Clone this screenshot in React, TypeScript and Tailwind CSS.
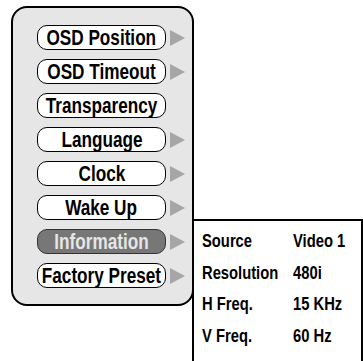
import React, { FC } from 'react';

type Item = { label: string; arrow: boolean; active?: boolean };

const items: Item[] = [
  { label: 'OSD Position', arrow: true },
  { label: 'OSD Timeout', arrow: true },
  { label: 'Transparency', arrow: false },
  { label: 'Language', arrow: true },
  { label: 'Clock', arrow: true },
  { label: 'Wake Up', arrow: true },
  { label: 'Information', arrow: true, active: true },
  { label: 'Factory Preset', arrow: true },
];

const info = [
  ['Source', 'Video 1'],
  ['Resolution', '480i'],
  ['H Freq.', '15 KHz'],
  ['V Freq.', '60 Hz'],
];

const Arrow: FC = () => (
  <svg width="15" height="16" viewBox="0 0 15 16">
    <polygon points="0,0 15,8 0,16" fill="#a6a6a6" />
  </svg>
);

// narrow face isn't installed, so squeeze Liberation Sans horizontally
const Narrow: FC<{ children: React.ReactNode; left?: boolean }> = ({ children, left }) => (
  <span
    className={
      left
        ? 'inline-block whitespace-nowrap scale-x-[0.82] origin-left'
        : 'inline-block whitespace-nowrap scale-x-[0.78] origin-center'
    }
  >
    {children}
  </span>
);

const App: FC = () => {
  return (
    <div className="w-[363px] h-[361px] overflow-hidden bg-white font-['Liberation_Sans',Arial,sans-serif] font-bold">
      <div className="flex items-start pl-[11px] pt-[6px]">
        <div className="w-[183px] h-[300px] shrink-0 rounded-[16px] border-2 border-black bg-[#e6e6e6] pl-[24px] pt-[17px]">
          <div className="flex flex-col gap-[9px]">
            {items.map((item) => (
              <div key={item.label} className="flex items-center gap-[4px]">
                <div
                  className={
                    item.active
                      ? 'w-[129px] h-[25px] flex items-center justify-center rounded-[10px] border-[1.5px] border-[#333] bg-[#777777] text-[#e6e6e6] text-[22px] leading-none'
                      : 'w-[129px] h-[25px] flex items-center justify-center rounded-[10px] border-[1.5px] border-black bg-white text-black text-[22px] leading-none'
                  }
                >
                  <Narrow>{item.label}</Narrow>
                </div>
                {item.arrow && <Arrow />}
              </div>
            ))}
          </div>
        </div>
        <div className="w-[171px] h-[160px] shrink-0 -ml-[2px] mt-[213px] border-2 border-black bg-white pl-[8px] pt-[5px]">
          <div className="grid grid-cols-[91px_1fr] text-[18px] leading-[31.5px] text-black">
            {info.map(([k, v]) => (
              <React.Fragment key={k}>
                <div>
                  <Narrow left>{k}</Narrow>
                </div>
                <div>
                  <Narrow left>{v}</Narrow>
                </div>
              </React.Fragment>
            ))}
          </div>
        </div>
      </div>
    </div>
  );
};

export default App;
